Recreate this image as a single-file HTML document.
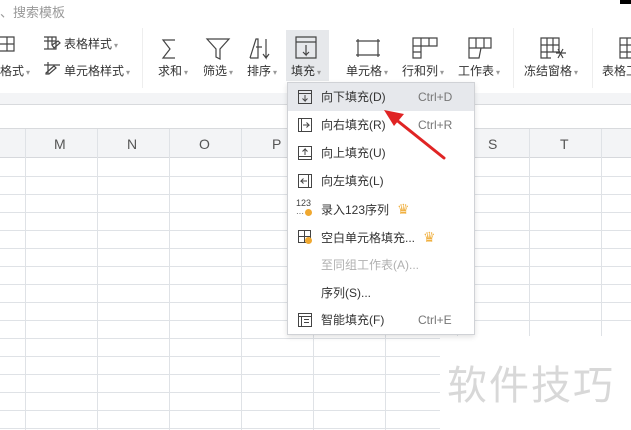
<!DOCTYPE html>
<html><head><meta charset="utf-8"><style>
*{margin:0;padding:0;box-sizing:border-box}
body{width:631px;height:430px;overflow:hidden;position:relative;background:#fff;font-family:"Liberation Sans","Noto Sans CJK SC",sans-serif;color:#333}
.a{position:absolute}
.t{font-size:12px;white-space:nowrap}
.lbl{position:absolute;top:62px;font-size:12px;color:#333;white-space:nowrap}
.car{color:#999;font-size:8px;margin-left:2px}
.mi{position:absolute;left:288px;width:186px;height:28px}
.mi .tx{position:absolute;left:33px;top:0;line-height:28px;font-size:12px;color:#333}
.mi .sc{position:absolute;left:130px;top:0;line-height:28px;font-size:12px;color:#777}
.mi svg{position:absolute;left:9px;top:6px}
.crown{color:#f0b040;font-size:14px;margin-left:8px}
</style></head><body>
<div class="a t" style="left:0;top:2px;color:#999;font-size:13px">、搜索模板</div>
<div class="a" style="left:620px;top:0;width:11px;height:4px;background:#000"></div>
<div class="a" style="left:0;top:93px;width:631px;height:12px;background:#f3f4f6;border-bottom:1px solid #d8dadd"></div>
<div class="a" style="left:142px;top:28px;width:1px;height:60px;background:#eee"></div>
<div class="a" style="left:513px;top:28px;width:1px;height:60px;background:#eee"></div>
<div class="a" style="left:592px;top:28px;width:1px;height:60px;background:#eee"></div>
<div class="a" style="left:286px;top:30px;width:43px;height:51px;background:#e6e8eb"></div>
<svg class="a" style="left:0;top:34px" width="631" height="46" fill="none" stroke="#444" stroke-width="1.2">
<path d="M0 3h14v14H0M0 10h14M7 3v14"/>
<path d="M44 3h12v12H44M44 7h12M48 3v12M52 3v8M52 11l6 -4l2 2l-6 5z"/>
<path d="M44 31h16M48 28v12M46 39l8-7l2 2l-7 6h-3z"/>
<path d="M175 6h-12l7 9l-7 9h12"/>
<path d="M207 5h22l-9 10v10l-4-2v-8z"/>
<path d="M250 24l6-19h2v19h-8M256 13h6M266 5v19l-3-4M266 24l3-4"/>
<path d="M296 3h20v21h-20zM296 8h20M306 11v10l-3-3M306 21l3-3"/>
<path d="M356 7h24M358 5v18M378 5v18M356 21h24"/>
<path d="M413 4h24v8h-24zM413 4v20h8v-20M421 12h-8M413 18h8M429 4v8"/>
<path d="M469 4h22v10h-22zM469 4v20h10l2-10M476 4v10M484 4v10"/>
<path d="M541 4h18v14h-18zM541 4v20h10M547 4v20M553 4v14M541 11h18M541 18h6M558 15l5 9M563 15l-5 9M556 19h10"/>
<path d="M620 4h14v20h-14zM620 11h14M620 18h14M627 4v20"/>
</svg>
<div class="lbl" style="left:0">格式<span class="car">▾</span></div>
<div class="lbl" style="left:64px;top:35px">表格样式<span class="car">▾</span></div>
<div class="lbl" style="left:64px;top:62px">单元格样式<span class="car">▾</span></div>
<div class="lbl" style="left:158px">求和<span class="car">▾</span></div>
<div class="lbl" style="left:203px">筛选<span class="car">▾</span></div>
<div class="lbl" style="left:247px">排序<span class="car">▾</span></div>
<div class="lbl" style="left:291px">填充<span class="car">▾</span></div>
<div class="lbl" style="left:346px">单元格<span class="car">▾</span></div>
<div class="lbl" style="left:402px">行和列<span class="car">▾</span></div>
<div class="lbl" style="left:458px">工作表<span class="car">▾</span></div>
<div class="lbl" style="left:524px">冻结窗格<span class="car">▾</span></div>
<div class="lbl" style="left:602px">表格工</div>
<div class="a" style="left:0;top:128px;width:631px;height:1px;background:#d8dadd"></div>
<div class="a" style="left:0;top:129px;width:631px;height:29px;background:#f3f4f6;border-bottom:1px solid #d6d8dc"></div>
<svg class="a" style="left:0;top:129px" width="631" height="301">
<g stroke="#dfe2e6" stroke-width="1">
<path d="M25.5 0V301M97.5 0V301M169.5 0V301M241.5 0V301M313.5 0V301M385.5 0V301M457.5 0V301M529.5 0V301M601.5 0V301"/>
<path d="M0 47.5H631M0 65.5H631M0 83.5H631M0 101.5H631M0 119.5H631M0 137.5H631M0 155.5H631M0 173.5H631M0 191.5H631M0 209.5H631M0 227.5H631M0 245.5H631M0 263.5H631M0 281.5H631M0 299.5H631"/>
</g></svg>
<div class="a" style="left:0;top:129px;width:631px;height:29px;font-size:14px;color:#555">
<span class="a" style="left:54px;top:7px">M</span><span class="a" style="left:127px;top:7px">N</span><span class="a" style="left:199px;top:7px">O</span><span class="a" style="left:272px;top:7px">P</span><span class="a" style="left:488px;top:7px">S</span><span class="a" style="left:560px;top:7px">T</span></div>
<div class="a" style="left:440px;top:336px;width:191px;height:94px;background:#fff"></div>
<div class="a" style="left:447px;top:353px;font-size:40px;color:#d8d8d8;letter-spacing:2px">软件技巧</div>
<div class="a" style="left:287px;top:82px;width:188px;height:253px;background:#fff;border:1px solid #d0d2d6;box-shadow:0 2px 5px rgba(0,0,0,.12)"></div>
<div class="mi" style="top:83px;background:#e6e8ec"><svg width="16" height="16" fill="none" stroke="#444"><path d="M1.5 1.5h13v13h-13zM1.5 4.5h13M8 6v6l-2.5-2.5M8 12l2.5-2.5"/></svg><span class="tx">向下填充(D)</span><span class="sc">Ctrl+D</span></div>
<div class="mi" style="top:111px"><svg width="16" height="16" fill="none" stroke="#444"><path d="M1.5 1.5h13v13h-13zM4.5 1.5v13M6 8h6l-2.5-2.5M12 8l-2.5 2.5"/></svg><span class="tx">向右填充(R)</span><span class="sc">Ctrl+R</span></div>
<div class="mi" style="top:139px"><svg width="16" height="16" fill="none" stroke="#444"><path d="M1.5 1.5h13v13h-13zM1.5 11.5h13M8 10v-6l-2.5 2.5M8 4l2.5 2.5"/></svg><span class="tx">向上填充(U)</span></div>
<div class="mi" style="top:167px"><svg width="16" height="16" fill="none" stroke="#444"><path d="M1.5 1.5h13v13h-13zM11.5 1.5v13M10 8h-6l2.5-2.5M4 8l2.5 2.5"/></svg><span class="tx">向左填充(L)</span></div>
<div class="mi" style="top:195px"><span class="a" style="left:8px;top:3px;font-size:9px;color:#444">123</span><span class="a" style="left:8px;top:14px;font-size:8px;color:#444">···</span><span class="a" style="left:17px;top:14px;width:7px;height:7px;border-radius:50%;background:#f0a830"></span><span class="tx">录入123序列<span class="crown">♛</span></span></div>
<div class="mi" style="top:223px"><svg width="16" height="16" fill="none" stroke="#444"><path d="M1.5 1.5h12v12h-12zM1.5 7.5h12M7.5 1.5v12"/></svg><span class="a" style="left:17px;top:14px;width:7px;height:7px;border-radius:50%;background:#f0a830"></span><span class="tx">空白单元格填充...<span class="crown">♛</span></span></div>
<div class="mi" style="top:251px"><span class="tx" style="color:#b0b0b0">至同组工作表(A)...</span></div>
<div class="mi" style="top:279px"><span class="tx">序列(S)...</span></div>
<div class="mi" style="top:306px"><svg width="16" height="16" fill="none" stroke="#444"><path d="M1.5 1.5h13v13h-13zM1.5 4.5h13M4.5 4.5v10M7 7.5h5M7 10.5h5"/></svg><span class="tx">智能填充(F)</span><span class="sc">Ctrl+E</span></div>
<svg class="a" style="left:370px;top:100px" width="90" height="70"><path d="M74 58L24 18" stroke="#e02424" stroke-width="3" stroke-linecap="round"/><path d="M14 10L34 14L24 26z" fill="#e02424"/></svg>
</body></html>
